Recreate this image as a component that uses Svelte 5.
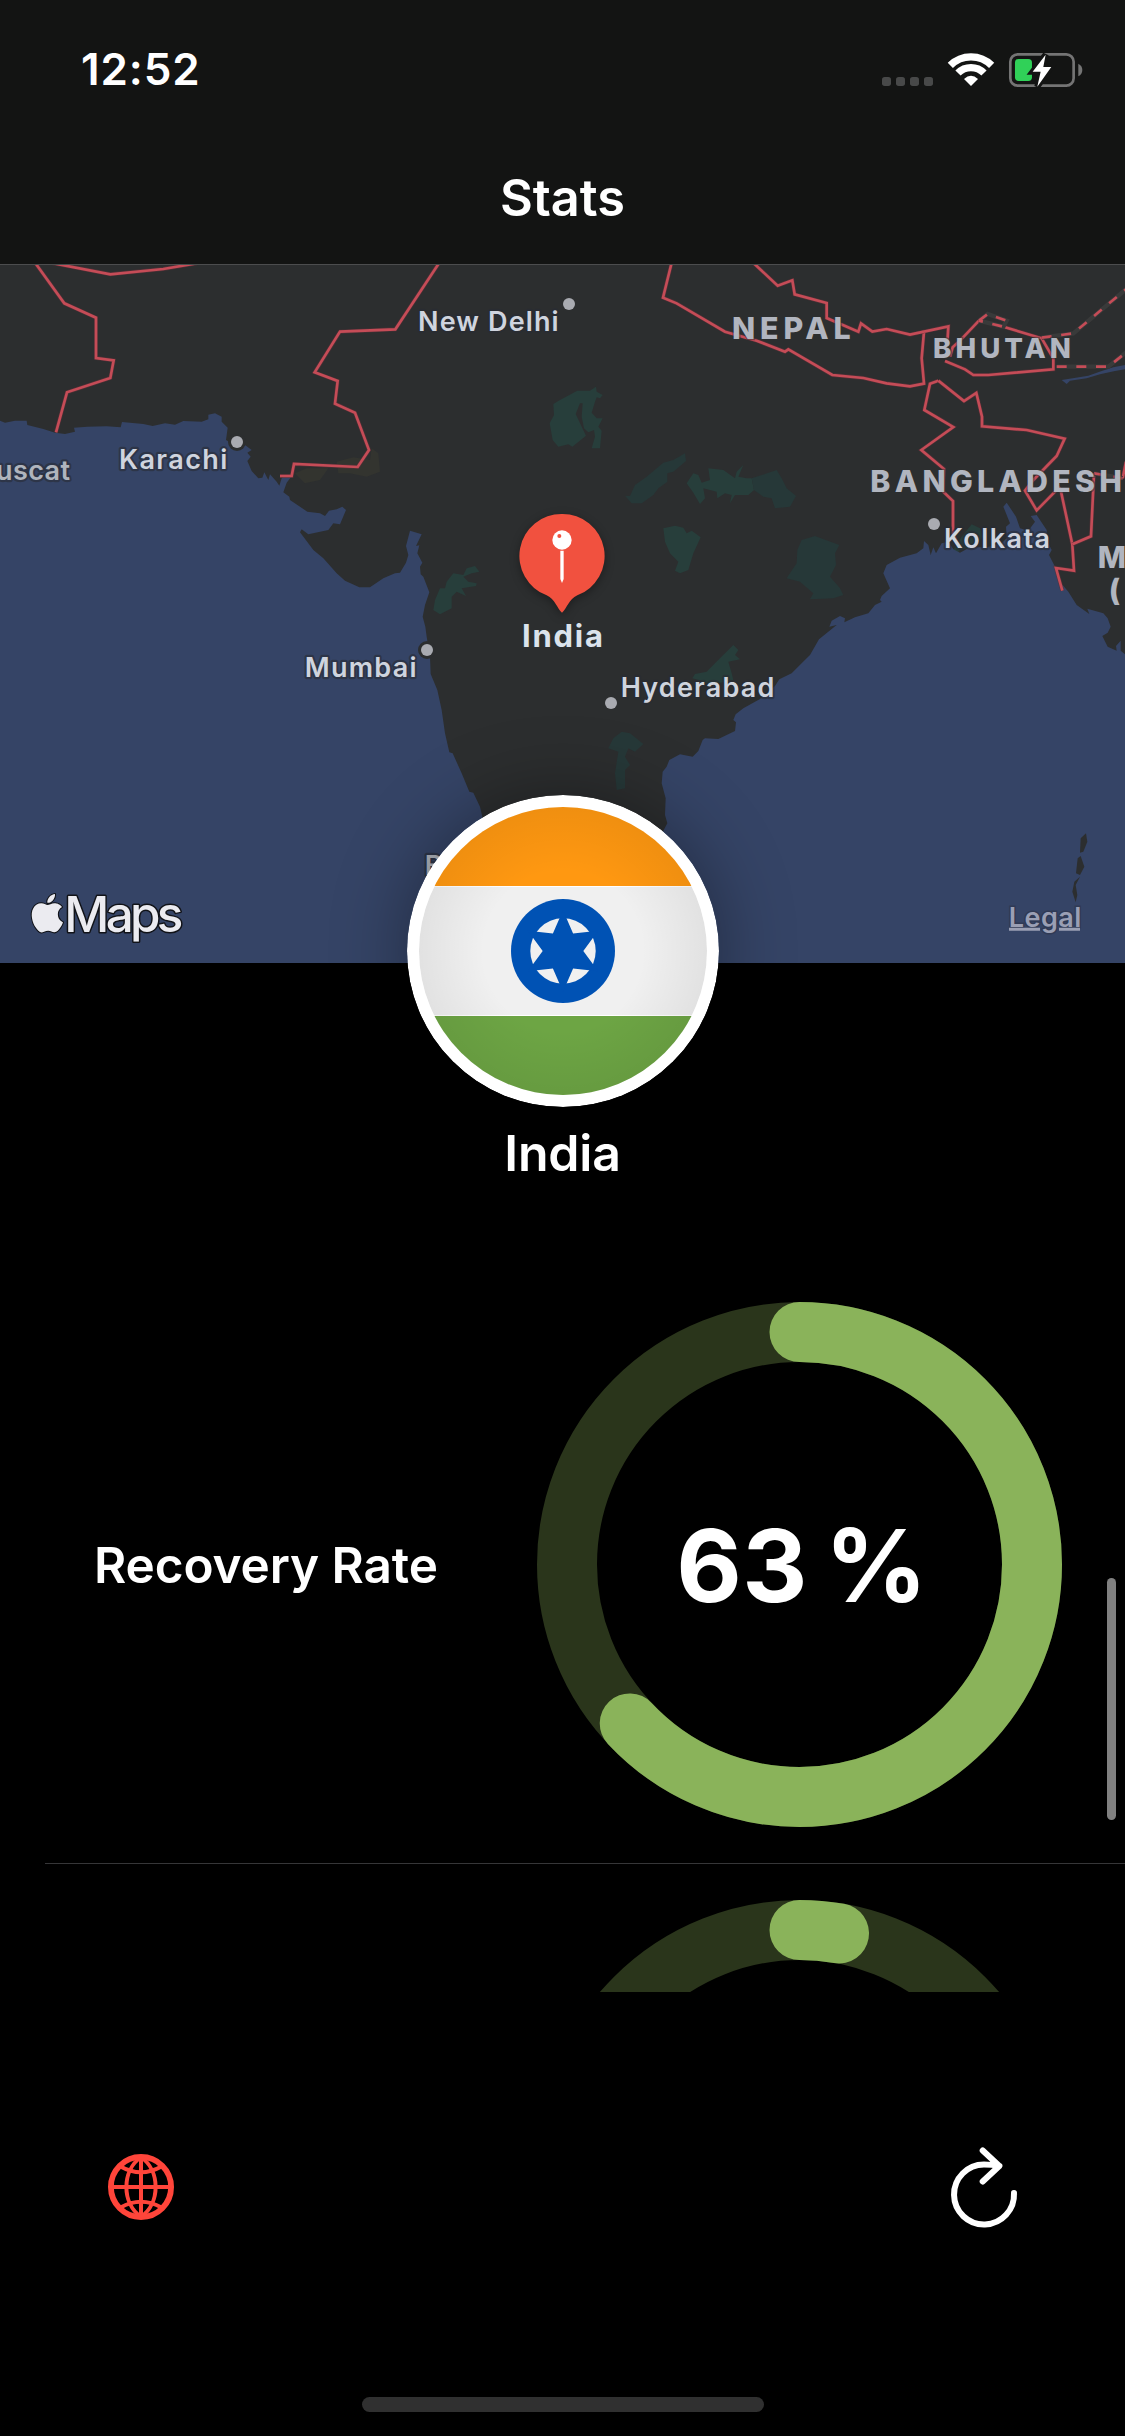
<script>
  const RADIUS = 232.5;
  const CIRCUMFERENCE = 2 * Math.PI * RADIUS;

  const rates = [
    { label: 'Recovery Rate', value: '63 %', fraction: 0.63 },
    { label: '', value: '', fraction: 0.0272 }
  ];

  // Map units are thirds of a pixel.
  const cities = [
    { name: 'Karachi', x: 357, y: 626, w: 325 },
    { name: 'New Delhi', x: 1254, y: 212, w: 422 },
    { name: 'Mumbai', x: 914, y: 1252, w: 336 },
    { name: 'Hyderabad', x: 1862, y: 1312, w: 461 },
    { name: 'Kolkata', x: 2832, y: 865, w: 318 }
  ];

  const countries = [
    { name: 'NEPAL', x: 2196, y: 237, w: 356, size: 91 },
    { name: 'BHUTAN', x: 2799, y: 293, w: 414, size: 83 },
    { name: 'BANGLADESH', x: 2611, y: 695, w: 755, size: 91 }
  ];

  const dots = [
    { x: 711, y: 546, coast: true },
    { x: 1707, y: 132, coast: false },
    { x: 1281, y: 1170, coast: true },
    { x: 1833, y: 1329, coast: false },
    { x: 2802, y: 792, coast: false }
  ];

  const borders = [
    'M105 8 193 130 288 173V294L341 301 331 354 201 397 168 517',
    'M150 8 331 43 490 27 590 10',
    'M1318 8 1186 208 1020 215 944 337 1013 363 1005 431 1065 458 1107 570 1073 621 882 612 875 648H840',
    'M2015 8 1989 113 2030 130 2175 215 2270 242 2355 275 2365 268 2497 345 2590 354 2660 370 2730 379 2772 371 2765 295 2772 215 2845 199 2842 250',
    'M2255 4 2333 77 2377 61 2384 103 2480 129V174L2575 215 2583 190 2617 215 2660 207 2730 224 2772 215',
    'M2835 303 2895 328 2920 345H2965L3160 328V295L3125 235 3010 200M2937 182 2880 242 2858 262 2850 290',
    'M2815 362 2790 371 2773 450 2860 501 2764 570 2832 627 2830 695 2859 723V820L2872 850',
    'M2815 362 2892 423 2929 399 2946 470V499L3080 510 3194 536 3170 588 3100 660 3075 692 3110 751 3180 680',
    'M3182 690 3217 853 3222 932 3168 924 3187 992',
    'M3217 853 3273 829 3282 640',
    'M3368 655 3378 605'
  ];

  const disputed = [
    'M2937 182 2963 162 3020 182 3010 200 2937 182',
    'M3125 233 3220 220 3380 86',
    'M3170 320H3325L3380 276',
    'M3282 640 3340 650 3368 655'
  ];

  const forests = [
    'M1732 392 1680 420 1660 432 1662 465 1649 490 1658 540 1675 560 1705 553 1717 560 1758 527 1727 462 1740 430 1748 430 1745 470 1752 505 1765 517 1782 510 1785 530 1775 565 1800 565 1805 512 1795 500 1808 475 1790 475 1775 458 1785 425 1790 412 1800 415 1808 405 1790 395 1788 380 1770 392Z',
    'M2080 640 2060 670 2080 698 2100 732 2115 715 2110 685 2150 695 2152 715 2175 700 2195 705 2190 730 2205 705 2245 705 2262 690 2255 655 2240 655 2215 650 2230 615 2210 635 2205 655 2170 630 2125 625 2130 660 2105 668 2095 645Z',
    'M1990 805 2025 797 2050 803 2060 820 2075 812 2102 832 2080 880 2065 930 2040 940 2025 932 2035 905 2010 880 1995 845Z',
    'M1425 918 1438 935 1415 940 1390 950 1405 965 1430 970 1428 978 1385 985 1398 1008 1370 995 1355 1010V1045L1320 1063 1300 1050 1305 1020 1320 985 1335 985 1340 965 1360 940 1390 945 1400 925Z',
    'M2200 1155 2215 1170 2205 1185 2220 1198 2185 1205 2195 1240 2200 1260 2130 1275 2095 1260 2077 1255 2085 1242 2120 1235 2145 1210Z',
    'M2885 830 2915 793 2940 805 2950 830 2920 860 2880 870 2865 885 2860 870Z'
  ];

  const paleForests = [
    'M1875 707 1890 708 1905 675 1940 650 1970 625 1990 608 2020 600 2055 580 2058 603 2020 635 2002 640V665L1975 685 1960 705 1925 730H1895Z',
    'M2255 655 2330 630 2345 655 2360 685 2388 708 2370 740 2325 745 2315 715 2290 710 2262 690Z',
    'M2405 840 2445 828 2518 855 2505 880 2508 915 2490 950 2520 985 2530 1005 2500 1015 2430 1018 2440 1000 2400 965 2360 955 2390 910 2392 870Z',
    'M1865 1415 1890 1420 1930 1452 1905 1475 1885 1465 1875 1490 1890 1515 1875 1530V1585L1850 1590 1845 1540 1855 1475 1825 1465 1840 1435Z'
  ];
</script>

<div class="screen">
  <header>
    <div class="status">
      <span class="time">12:52</span>
      <svg class="status-icons" viewBox="60 60 610 111">
        {#each [66, 108, 150, 192] as x}
          <rect {x} y="138" width="27" height="27" rx="8" fill="#484949" />
        {/each}
        <g fill="none" stroke="#fff" stroke-width="22">
          <path d="M271 103A88 88 0 0 1 395 103" />
          <path d="M294 126A55 55 0 0 1 372 126" />
        </g>
        <path d="M333 165 312 144Q333 124 354 144Z" fill="#fff" />
        <rect x="451" y="70" width="190" height="94" rx="22" fill="none" stroke="#747474" stroke-width="8" />
        <rect x="465" y="84" width="51" height="66" rx="11" fill="#30d158" />
        <path d="M655 98Q667 104 667 117T655 136Z" fill="#747474" />
        <path d="M557 71 518 122H542L532 167 574 108H550Z" fill="#fff" stroke="#131413" stroke-width="18" paint-order="stroke" />
      </svg>
    </div>
    <h1>Stats</h1>
  </header>

  <section class="map">
    <svg viewBox="0 12 3375 2097" width="1125" height="699">
      <rect y="0" width="3375" height="2110" fill="#2c2e2f" />
      <g fill="#33342f">
        <path d="M885 640 920 625 985 625 960 660 915 670Z" />
        <path d="M1010 605 1060 592 1110 600 1115 565 1135 580 1140 635 1100 650 1050 640 1015 640Z" />
      </g>
      {#each forests as d}<path {d} fill="#273e3b" />{/each}
      {#each paleForests as d}<path {d} fill="#263838" />{/each}
      <g class="water">
        <path d="M0 482 15 488 45 482H80L82 495 130 507 165 518 195 522 225 515 222 503 262 500 320 499 362 502 366 486 430 492 458 498 495 490 525 494 550 483 605 485 625 478V464L645 460 665 470V485L683 503 678 540 700 552 735 555 755 570 742 578 752 590 742 603 755 633 775 655 787 653 793 637 805 660 810 643 830 665 838 677 845 655 855 647 880 642 860 668 850 697 868 710 870 720 922 755 960 760 975 768 987 752 1010 748 1027 740 1038 750 1020 793 1000 790 985 810 925 823 905 808 900 817 940 870 970 895 1010 940 1035 962 1078 982H1110L1150 955 1185 940 1200 938 1218 908 1225 885 1218 858 1230 812 1265 823 1248 858 1258 856 1252 880 1267 908 1260 920 1262 943 1270 950 1288 997 1275 1035 1268 1070 1276 1100 1280 1130 1290 1190 1292 1242 1312 1290 1325 1350 1335 1420 1348 1477 1358 1480 1385 1540 1408 1595 1420 1598 1440 1640 1447 1670 1460 1740 1500 2109H0Z" />
        <path d="M1900 2109 1990 1712 2002 1690 1995 1665 1997 1615 1985 1570 1988 1535 2000 1520 2008 1500 2040 1483 2078 1490 2095 1473 2108 1440 2115 1435 2155 1437 2205 1413 2208 1387 2200 1380 2207 1363 2230 1345 2280 1317 2325 1278 2338 1258 2375 1240 2408 1207 2430 1185 2457 1138 2510 1095 2488 1100 2495 1082 2520 1068 2535 1075 2533 1087 2565 1072 2605 1060 2625 1035 2645 1025 2640 1020 2645 1008 2670 985 2650 940 2660 915 2700 893 2750 880 2770 865 2772 843 2785 855 2792 885 2800 862 2808 880 2825 850 2845 845 2860 868 2880 878 2910 862 2960 862 3005 850 3020 835 3018 800 3030 790 3010 740 3020 728 3048 770 3060 805 3085 812 3105 785 3092 768 3110 765 3140 810 3145 850 3155 870 3147 885 3165 920 3175 960 3205 995 3230 1035 3268 1062 3262 1046 3310 1060 3323 1075 3332 1100 3323 1118 3307 1128 3323 1160 3350 1172 3348 1158 3362 1142V1172L3375 1183V2109Z" />
        <path d="M3185 360 3265 347 3305 333 3340 322 3375 315V328L3345 333 3300 343 3260 355 3210 362 3200 372Z" />
      </g>
      <g fill="#2c2e2f">
        <path d="M3258 1720 3262 1745 3250 1775 3240 1778 3242 1735Z" />
        <path d="M3242 1788 3253 1820 3240 1845 3228 1840 3233 1795Z" />
        <path d="M3240 1850 3227 1875 3232 1905 3227 1927 3217 1895 3223 1865Z" />
      </g>
      {#each borders as d}<path {d} class="border-casing" /><path {d} class="border" />{/each}
      {#each disputed as d}<path {d} class="disputed-base" /><path {d} class="border disputed" />{/each}

      {#each dots as dot}
        {#if dot.coast}<circle cx={dot.x} cy={dot.y} r="27" fill="#2c2e2f" />{/if}
        <circle cx={dot.x} cy={dot.y} r="18" fill="#a9abb1" />
      {/each}
      {#each cities as c}
        <text class="city" x={c.x} y={c.y} textLength={c.w}>{c.name}</text>
      {/each}
      <text class="city dim" x="-12" y="660" textLength="222">uscat</text>
      <text class="city dim" x="1274" y="1845">B</text>
      {#each countries as c}
        <text class="country" x={c.x} y={c.y} textLength={c.w} font-size={c.size}>{c.name}</text>
      {/each}
      <text class="country" x="3293" y="925" font-size="90">M</text>
      <text class="country" x="3326" y="1022" font-size="90">(</text>

      <g class="marker">
        <path d="M1686 762A126 126 0 0 0 1640 1006C1666 1018 1670 1044 1686 1058C1702 1044 1706 1018 1732 1006A126 126 0 0 0 1686 762Z" fill="#f1513f" />
      </g>
      <circle cx="1686" cy="840" r="29" fill="#fff" />
      <circle cx="1678" cy="828" r="6" fill="#f1513f" />
      <path d="M1681 872H1691V957L1686 969 1681 957Z" fill="#fff" />
      <text class="marker-name" x="1566" y="1162" textLength="243">India</text>

      <g class="brand">
        <path transform="translate(84.5 1902) scale(4.8)" stroke-width="1.3" d="M12.152 6.896c-.948 0-2.415-1.078-3.96-1.04-2.04.027-3.91 1.183-4.961 3.014-2.117 3.675-.546 9.103 1.519 12.09 1.013 1.454 2.208 3.09 3.792 3.039 1.52-.065 2.09-.987 3.935-.987 1.831 0 2.35.987 3.96.948 1.637-.026 2.676-1.48 3.676-2.948 1.156-1.688 1.636-3.325 1.662-3.415-.039-.013-3.182-1.221-3.22-4.857-.026-3.04 2.48-4.494 2.597-4.559-1.429-2.09-3.623-2.324-4.39-2.376-2-.156-3.675 1.09-4.61 1.09zM15.53 3.83c.843-1.012 1.4-2.427 1.245-3.83-1.207.052-2.662.805-3.532 1.818-.78.896-1.454 2.338-1.273 3.714 1.338.104 2.715-.688 3.559-1.701" />
        <text x="193" y="2015" textLength="357" stroke-width="9">Maps</text>
      </g>
      <text class="legal" x="3026" y="2000" textLength="218">Legal</text>
      <path d="M3027 2008H3120M3177 2008H3240" stroke="#9a9fb4" stroke-width="9" />
    </svg>
  </section>

  <section class="country-card">
    <svg class="flag" viewBox="-156 -156 312 312">
      <defs>
        <clipPath id="disc"><circle r="144" /></clipPath>
        <radialGradient id="shade">
          <stop offset="0.55" stop-color="#000" stop-opacity="0" />
          <stop offset="1" stop-color="#000" stop-opacity="0.06" />
        </radialGradient>
      </defs>
      <circle r="156" fill="#fff" />
      <g clip-path="url(#disc)">
        <rect x="-144" y="-144" width="288" height="288" fill="#f0f0f0" />
        <rect x="-144" y="-144" width="288" height="79" fill="#ff9811" />
        <rect x="-144" y="65" width="288" height="79" fill="#6da544" />
        <path d="M-144-64.5H144M-144 64.5H144" stroke="#fff" stroke-width="1" />
        <circle r="52" fill="#0052b4" />
        <circle r="32.7" fill="#f0f0f0" />
        <path fill="#0052b4" d="M0-40.7 10.1-17.6 35.2-20.3 20.3 0 35.2 20.3 10.1 17.6 0 40.7-10.1 17.6-35.2 20.3-20.3 0-35.2-20.3-10.1-17.6Z" />
        <circle r="144" fill="url(#shade)" />
      </g>
    </svg>
    <h2>India</h2>
  </section>

  <main>
    {#each rates as rate}
      <div class="row">
        <span class="label">{rate.label}</span>
        <div class="ring">
          <svg viewBox="0 0 525 525">
            <circle cx="262.5" cy="262.5" r={RADIUS} stroke="#2a351b" />
            <circle
              cx="262.5" cy="262.5" r={RADIUS} stroke="#8ab35a" stroke-linecap="round"
              stroke-dasharray="{CIRCUMFERENCE * rate.fraction} {CIRCUMFERENCE}"
              transform="rotate(-90 262.5 262.5)"
            />
          </svg>
          <strong>{rate.value}</strong>
        </div>
      </div>
    {/each}
    <div class="scrollbar"></div>
  </main>

  <footer>
    <nav>
      <svg class="globe" width="68" height="68" viewBox="-34 -34 68 68" fill="none" stroke="#ff453a" stroke-width="4">
        <circle r="30.1" stroke-width="5.8" />
        <path d="M0-31V31M-31 0H31" />
        <path d="M0-30C-19.500-16-19.500 16 0 30M0-30C19.500-16 19.500 16 0 30" />
        <path d="M-20.500-20.500Q0-9 20.500-20.500M-20.500 20.500Q0 9 20.500 20.500" />
      </svg>
      <svg width="80" height="84" viewBox="-40 -50 80 84" fill="none" stroke="#fff" stroke-width="6" stroke-linecap="round" stroke-linejoin="round">
        <path d="M30-1A30 30 0 1 1 0-29.500Q8-29.500 15.500-28M-1.300-43.500 15.300-28-1.300-12.500" />
      </svg>
    </nav>
    <div class="home-indicator"></div>
  </footer>
</div>

<style>
  :global(body) {
    background: #000;
  }
  .screen {
    width: 1125px;
    height: 2436px;
    display: flex;
    flex-direction: column;
    overflow: hidden;
    background: #000;
    color: #fff;
    font-family: Inter, 'Liberation Sans', sans-serif;
  }
  svg {
    display: block;
  }
  header {
    height: 265px;
    box-sizing: border-box;
    background: #131413;
    border-bottom: 1px solid #4c4d4e;
    flex: none;
  }
  .status {
    height: 138px;
    display: flex;
    align-items: center;
    justify-content: space-between;
    padding: 0 42px 0 81px;
  }
  .time {
    font-size: 44px;
    font-weight: 600;
    letter-spacing: 0.9px;
  }
  .status-icons {
    width: 203.300px;
    height: 37px;
  }
  h1,
  h2 {
    margin: 0;
    font-weight: 600;
    text-align: center;
  }
  h1 {
    font-size: 50.500px;
    line-height: 120px;
    letter-spacing: 0;
  }
  .map {
    height: 698px;
    flex: none;
    display: flex;
    align-items: flex-end;
    overflow: hidden;
  }
  .map svg {
    flex: none;
  }
  .water {
    fill: #354466;
  }
  .border,
  .border-casing,
  .disputed-base {
    fill: none;
    stroke: #c54c57;
    stroke-width: 8;
  }
  .border-casing {
    stroke: #5a3138;
    stroke-width: 12;
    stroke-opacity: 0.7;
  }
  .disputed-base {
    stroke: #393a3a;
    stroke-width: 13;
  }
  .disputed {
    stroke-dasharray: 30 29;
  }
  .city {
    font-size: 81px;
    font-weight: 600;
    fill: #cfd4de;
    stroke: #282c35;
    stroke-opacity: 0.6;
    stroke-width: 13;
    stroke-linejoin: round;
    paint-order: stroke;
  }
  .city.dim {
    fill: #b0b5bd;
  }
  .country {
    font-weight: 800;
    fill: #b1b5bf;
    stroke: #2c2e2f;
    stroke-opacity: 0.5;
    stroke-width: 8;
    paint-order: stroke;
  }
  .marker {
    filter: drop-shadow(0 8px 14px rgb(0 0 0 / 0.35));
  }
  .marker-name {
    font-size: 93px;
    font-weight: 700;
    fill: #dbe3ec;
  }
  .brand {
    fill: #ebebf0;
    stroke: #111318;
    paint-order: stroke;
    stroke-linejoin: round;
    font-size: 148px;
    font-weight: 500;
  }
  .legal {
    font-size: 81px;
    font-weight: 600;
    fill: #9a9fb4;
    stroke: #303a55;
    stroke-width: 9;
    paint-order: stroke;
  }
  .country-card {
    margin-top: -168px;
    height: 471px;
    flex: none;
    display: flex;
    flex-direction: column;
    align-items: center;
    z-index: 1;
  }
  .flag {
    width: 312px;
    height: 312px;
    flex: none;
    border-radius: 50%;
    box-shadow: 0 0 75px rgb(0 0 0 / 0.36);
  }
  h2 {
    font-size: 50px;
    line-height: 92px;
    letter-spacing: -0.2px;
  }
  main {
    position: relative;
    height: 726px;
    flex: none;
    overflow: hidden;
  }
  .row {
    height: 598px;
    box-sizing: border-box;
    margin-left: 45px;
    padding: 0 63px 0 49px;
    border-bottom: 1px solid #363638;
    display: flex;
    align-items: center;
    justify-content: space-between;
  }
  .label {
    font-size: 49.500px;
    font-weight: 600;
    letter-spacing: -0.1px;
  }
  .ring {
    width: 525px;
    height: 525px;
    display: grid;
    place-items: center;
  }
  .ring > * {
    grid-area: 1 / 1;
  }
  .ring svg {
    width: 525px;
    height: 525px;
    fill: none;
    stroke-width: 60;
  }
  .ring strong {
    font-size: 101px;
    font-weight: 700;
    letter-spacing: 0.6px;
    word-spacing: -8px;
    padding-left: 5px;
  }
  .scrollbar {
    position: absolute;
    right: 9px;
    top: 312px;
    width: 9px;
    height: 242px;
    border-radius: 5px;
    background: #808080;
  }
  footer {
    flex: 1;
    display: flex;
    flex-direction: column;
    justify-content: space-between;
    align-items: center;
  }
  nav {
    align-self: stretch;
    display: flex;
    justify-content: space-between;
    align-items: center;
    padding: 152px 101px 0 107px;
  }
  .globe {
    margin-top: 2px;
  }
  .home-indicator {
    width: 402px;
    height: 15px;
    margin-bottom: 24px;
    border-radius: 8px;
    background: #303030;
  }
</style>
